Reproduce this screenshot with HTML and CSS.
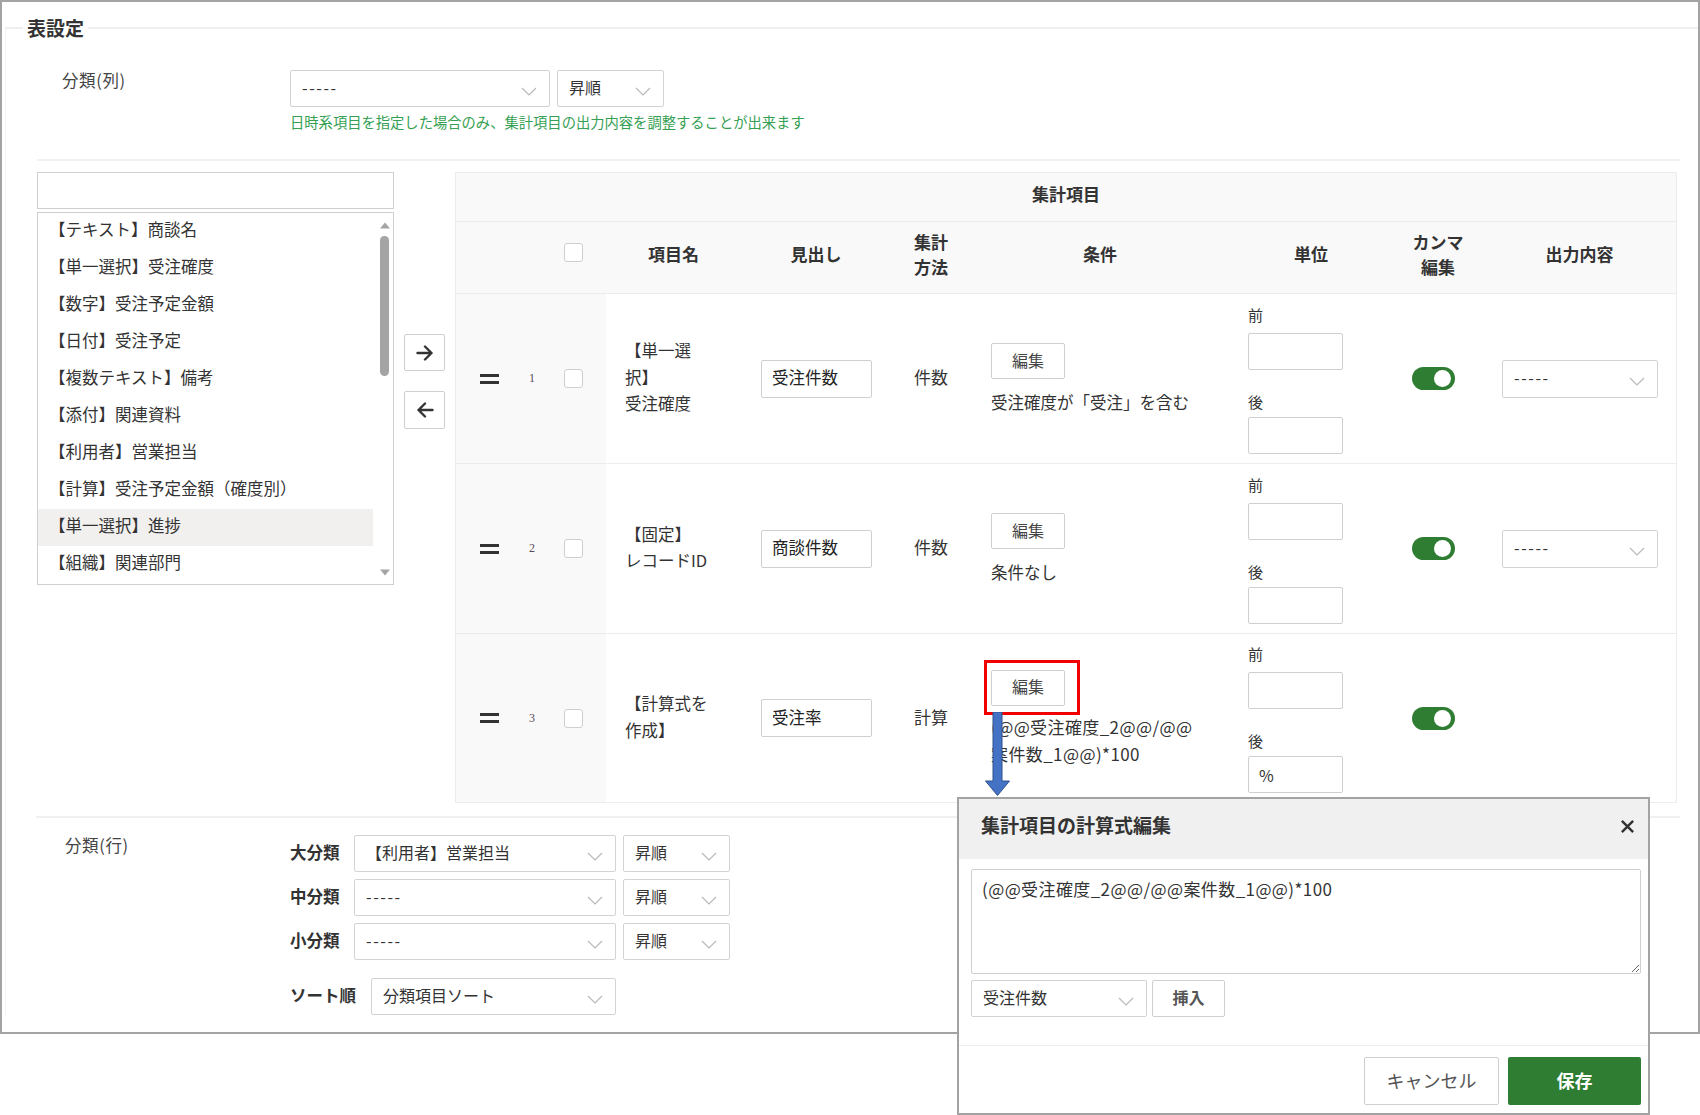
FILE: index.html
```html
<!DOCTYPE html>
<html lang="ja">
<head>
<meta charset="utf-8">
<title>表設定</title>
<link rel="stylesheet" href="styles.css">
</head>
<body>
<div class="frame">
  <fieldset class="fs">
    <legend class="fs-title">表設定</legend>

    <div class="col-row">
      <div class="lbl">分類(列)</div>
      <div>
        <div class="sel-line">
          <div class="sel w260"><span class="dash">-----</span><svg class="chev" viewBox="0 0 16 9"><path d="M1 1l7 7 7-7"/></svg></div>
          <div class="sel w107"><span>昇順</span><svg class="chev" viewBox="0 0 16 9"><path d="M1 1l7 7 7-7"/></svg></div>
        </div>
        <p class="help">日時系項目を指定した場合のみ、集計項目の出力内容を調整することが出来ます</p>
      </div>
    </div>

    <hr class="sep">

    <div class="main">
      <div class="picker">
        <div class="search"></div>
        <div class="listbox">
          <ul class="items">
            <li>【テキスト】商談名</li>
            <li>【単一選択】受注確度</li>
            <li>【数字】受注予定金額</li>
            <li>【日付】受注予定</li>
            <li>【複数テキスト】備考</li>
            <li>【添付】関連資料</li>
            <li>【利用者】営業担当</li>
            <li>【計算】受注予定金額（確度別）</li>
            <li class="on">【単一選択】進捗</li>
            <li>【組織】関連部門</li>
          </ul>
          <div class="sbar">
            <svg class="tri" viewBox="0 0 10 6"><path d="M5 0L10 6H0z"/></svg>
            <div class="thumb"></div>
            <svg class="tri down" viewBox="0 0 10 6"><path d="M0 0H10L5 6z"/></svg>
          </div>
        </div>
      </div>

      <div class="movers">
        <div class="mv"><svg viewBox="0 0 18 16"><path d="M1.5 8H15.5M9 1.5L15.5 8 9 14.5"/></svg></div>
        <div class="mv mv2"><svg viewBox="0 0 18 16"><path d="M16.5 8H2.5M9 1.5L2.5 8 9 14.5"/></svg></div>
      </div>

      <div class="agg">
        <div class="agg-title">集計項目</div>
        <div class="grid head">
          <div class="c lead"><span class="cb hcb"></span></div>
          <div class="c ctr">項目名</div>
          <div class="c ctr">見出し</div>
          <div class="c ctr two">集計<br>方法</div>
          <div class="c ctr">条件</div>
          <div class="c ctr">単位</div>
          <div class="c ctr two">カンマ<br>編集</div>
          <div class="c ctr">出力内容</div>
        </div>

        <div class="grid row">
          <div class="c lead"><span class="handle"></span><span class="num">1</span><span class="cb"></span></div>
          <div class="c name">【単一選<br>択】<br>受注確度</div>
          <div class="c pl20"><div class="inp">受注件数</div></div>
          <div class="c ctr">件数</div>
          <div class="c cond"><div><div class="btn">編集</div><div class="ctext">受注確度が「受注」を含む</div></div></div>
          <div class="c unit"><div><div class="ul">前</div><div class="uin"></div><div class="ul ul2">後</div><div class="uin"></div></div></div>
          <div class="c tg"><span class="toggle"></span></div>
          <div class="c out"><div class="sel w156"><span class="dash">-----</span><svg class="chev" viewBox="0 0 16 9"><path d="M1 1l7 7 7-7"/></svg></div></div>
        </div>

        <div class="grid row">
          <div class="c lead"><span class="handle"></span><span class="num">2</span><span class="cb"></span></div>
          <div class="c name">【固定】<br>レコードID</div>
          <div class="c pl20"><div class="inp">商談件数</div></div>
          <div class="c ctr">件数</div>
          <div class="c cond"><div><div class="btn">編集</div><div class="ctext">条件なし</div></div></div>
          <div class="c unit"><div><div class="ul">前</div><div class="uin"></div><div class="ul ul2">後</div><div class="uin"></div></div></div>
          <div class="c tg"><span class="toggle"></span></div>
          <div class="c out"><div class="sel w156"><span class="dash">-----</span><svg class="chev" viewBox="0 0 16 9"><path d="M1 1l7 7 7-7"/></svg></div></div>
        </div>

        <div class="grid row last">
          <div class="c lead"><span class="handle"></span><span class="num">3</span><span class="cb"></span></div>
          <div class="c name">【計算式を<br>作成】</div>
          <div class="c pl20"><div class="inp">受注率</div></div>
          <div class="c ctr">計算</div>
          <div class="c cond"><div><div class="hl-wrap"><div class="btn">編集</div><span class="hl"></span></div><div class="ctext formula">(@@受注確度_2@@/@@<br>案件数_1@@)*100</div></div></div>
          <div class="c unit"><div><div class="ul">前</div><div class="uin"></div><div class="ul ul2">後</div><div class="uin">%</div></div></div>
          <div class="c tg"><span class="toggle"></span></div>
          <div class="c out"></div>
        </div>
      </div>
    </div>

    <hr class="sep sep2">

    <div class="rowcat">
      <div class="lbl lbl2">分類(行)</div>
      <div>
        <div class="levels">
          <div class="lv">大分類</div>
          <div class="sel"><span>【利用者】営業担当</span><svg class="chev" viewBox="0 0 16 9"><path d="M1 1l7 7 7-7"/></svg></div>
          <div class="sel"><span>昇順</span><svg class="chev" viewBox="0 0 16 9"><path d="M1 1l7 7 7-7"/></svg></div>
          <div class="lv">中分類</div>
          <div class="sel"><span class="dash">-----</span><svg class="chev" viewBox="0 0 16 9"><path d="M1 1l7 7 7-7"/></svg></div>
          <div class="sel"><span>昇順</span><svg class="chev" viewBox="0 0 16 9"><path d="M1 1l7 7 7-7"/></svg></div>
          <div class="lv">小分類</div>
          <div class="sel"><span class="dash">-----</span><svg class="chev" viewBox="0 0 16 9"><path d="M1 1l7 7 7-7"/></svg></div>
          <div class="sel"><span>昇順</span><svg class="chev" viewBox="0 0 16 9"><path d="M1 1l7 7 7-7"/></svg></div>
        </div>
        <div class="sortrow">
          <div class="lv">ソート順</div>
          <div class="sel w245"><span>分類項目ソート</span><svg class="chev" viewBox="0 0 16 9"><path d="M1 1l7 7 7-7"/></svg></div>
        </div>
      </div>
    </div>
  </fieldset>
</div>

<svg class="blue-arrow" viewBox="0 0 28 85"><path d="M10 0H19V69H26.5L14.5 83.5 2.5 69H10Z"/></svg>

<div class="modal">
  <div class="m-head">
    <div class="m-title">集計項目の計算式編集</div>
    <svg class="m-close" viewBox="0 0 16 16"><path d="M2 2L14 14M14 2L2 14"/></svg>
  </div>
  <div class="m-body">
    <textarea class="m-text" readonly>(@@受注確度_2@@/@@案件数_1@@)*100</textarea>
    <div class="m-ins">
      <div class="sel w176"><span>受注件数</span><svg class="chev" viewBox="0 0 16 9"><path d="M1 1l7 7 7-7"/></svg></div>
      <div class="btn ins">挿入</div>
    </div>
  </div>
  <div class="m-foot">
    <div class="fbtn cancel">キャンセル</div>
    <div class="fbtn save">保存</div>
  </div>
</div>
</body>
</html>
```

FILE: styles.css
```css
* { box-sizing: border-box; }
html, body { margin: 0; padding: 0; background: #fff; }
body {
  font-family: "Noto Sans CJK JP", "Noto Sans", sans-serif;
  color: #333;
  font-size: 17px;
  position: relative;
  width: 1700px;
  height: 1115px;
  overflow: hidden;
}

.frame {
  width: 1700px;
  height: 1034px;
  border: 2px solid #a3a3a3;
}

.fs {
  margin: 14px 0 0 3px;
  padding: 0;
  border: 0;
  border-top: 2px solid #efefef;
  border-left: 1px solid #f2f2f2;
  min-inline-size: 0;
}
.fs-title {
  margin-left: 17px;
  padding: 0 4px;
  font-size: 19px;
  font-weight: bold;
  line-height: 24px;
  color: #333;
}

/* 分類(列) */
.col-row {
  display: grid;
  grid-template-columns: 228px 1fr;
  padding: 30px 0 0 56px;
}
.lbl { font-size: 16.5px; letter-spacing: 0.6px; line-height: 20px; margin-top: 0; color: #444; }
.sel-line { display: flex; gap: 7px; }
.sel {
  height: 37px;
  border: 1px solid #d3d3d3;
  border-radius: 2px;
  background: #fff;
  display: flex;
  align-items: center;
  justify-content: space-between;
  padding: 0 12px 3px 11px;
  font-size: 16px;
  color: #333;
  white-space: nowrap;
}
.sel span { line-height: 20px; }
.sel .dash { letter-spacing: 1.6px; }
.chev { width: 16px; height: 9px; margin-top: 9px; flex: none; }
.chev path { fill: none; stroke: #b9b9b9; stroke-width: 1.2; }
.w260 { width: 260px; }
.w107 { width: 107px; }
.w156 { width: 156px; height: 38px; }
.w245 { width: 245px; }
.w176 { width: 176px; }
.help {
  margin: 5px 0 0;
  font-size: 14.3px;
  line-height: 20px;
  color: #34a052;
}

.sep {
  height: 0;
  border: 0;
  border-top: 2px solid #f0f0f0;
  margin: 27px 18px 0 31px;
}

/* main */
.main {
  display: flex;
  align-items: flex-start;
  margin: 11px 0 0 31px;
}
.picker { width: 357px; }
.search { height: 37px; border: 1px solid #cfcfcf; background: #fff; }
.listbox {
  margin-top: 3px;
  height: 373px;
  border: 1px solid #cfcfcf;
  display: flex;
}
.items { list-style: none; margin: 0; padding: 0; flex: 1; }
.items li {
  height: 37px;
  line-height: 33px;
  padding-left: 11px;
  font-size: 16.5px;
  white-space: nowrap;
}
.items li.on { background: #f1f0ef; }
.sbar {
  width: 17px;
  margin-left: 3px;
  display: flex;
  flex-direction: column;
  align-items: center;
}
.tri { width: 10px; height: 7px; margin-top: 9px; flex: none; }
.tri path { fill: #a4a4a4; }
.tri.down { margin-top: auto; margin-bottom: 8px; }
.thumb { width: 9px; height: 140px; margin-top: 7px; border-radius: 5px; background: #a4a4a4; }

.movers { width: 41px; margin-left: 10px; padding-top: 162px; }
.mv {
  height: 37px;
  border: 1px solid #cfcfcf;
  border-radius: 2px;
  display: flex;
  align-items: center;
  justify-content: center;
  background: #fff;
}
.mv2 { margin-top: 20px; height: 38px; }
.mv svg { width: 18px; height: 16px; }
.mv path { fill: none; stroke: #333; stroke-width: 2.4; stroke-linecap: round; stroke-linejoin: round; }

/* 集計項目 table */
.agg {
  width: 1222px;
  margin-left: 10px;
  border: 1px solid #ececec;
}
.agg-title {
  height: 49px;
  padding-bottom: 8px;
  border-bottom: 1px solid #ececec;
  background: #f9f9f9;
  display: flex;
  align-items: center;
  justify-content: center;
  font-weight: bold;
  font-size: 17px;
}
.grid {
  display: grid;
  grid-template-columns: 150px 135px 150px 80px 258px 164px 90px 193px;
  border-bottom: 1px solid #ececec;
}
.grid.last { border-bottom: 0; }
.head { height: 72px; background: #f9f9f9; font-weight: bold; }
.head .c { padding-bottom: 8px; }
.head .lead { padding-bottom: 0; }
.row { height: 170px; }
.row.last { height: 168px; }
.c { display: flex; align-items: center; }
.ctr { justify-content: center; text-align: center; }
.row .ctr { padding-bottom: 4px; }
.two { line-height: 25px; }
.lead { background: #f9f9f9; padding-left: 24px; }
.head .lead { padding-left: 108px; }
.hcb { margin-bottom: 10px; }
.handle {
  width: 19px;
  height: 10px;
  border-top: 3px solid #333;
  border-bottom: 3px solid #333;
  flex: none;
}
.num {
  width: 8px;
  margin-left: 29px;
  font-size: 12px;
  color: #5a4a5a;
  text-align: center;
  font-family: "Liberation Serif", serif;
}
.cb {
  width: 19px;
  height: 19px;
  border: 1px solid #cfcfcf;
  border-radius: 3px;
  background: #fff;
  margin-left: 28px;
  flex: none;
}
.head .cb { margin-left: 0; }
.name { padding-left: 19px; padding-bottom: 3px; line-height: 26.5px; font-size: 16.5px; }
.pl20 { padding-left: 20px; }
.inp {
  width: 111px;
  height: 38px;
  border: 1px solid #cfcfcf;
  border-radius: 2px;
  padding: 0 0 3px 10px;
  display: flex;
  align-items: center;
  font-size: 16.5px;
  color: #222;
}
.cond { padding-left: 20px; }
.btn {
  width: 74px;
  height: 36px;
  border: 1px solid #cfcfcf;
  border-radius: 2px;
  background: #fff;
  display: flex;
  align-items: center;
  justify-content: center;
  padding-bottom: 3px;
  font-size: 16px;
  color: #444;
}
.ctext { margin-top: 11px; font-size: 16.5px; line-height: 24px; white-space: nowrap; }
.formula { margin-top: 7px; line-height: 27px; font-size: 17px; letter-spacing: 0.4px; }
.hl-wrap { position: relative; width: 74px; }
.hl {
  position: absolute;
  left: -7px;
  top: -10px;
  width: 96px;
  height: 55px;
  border: 3px solid #f00000;
}
.unit { padding-left: 19px; }
.ul { font-size: 15px; line-height: 22px; }
.ul2 { margin-top: 21px; }
.uin {
  width: 95px;
  height: 37px;
  border: 1px solid #cfcfcf;
  border-radius: 2px;
  margin-top: 7px;
  padding-left: 10px;
  display: flex;
  align-items: center;
  font-size: 16px;
}
.ul2 + .uin { margin-top: 4px; }
.tg { padding-left: 19px; }
.toggle {
  width: 43px;
  height: 23px;
  border-radius: 12px;
  background: #2e7d32;
  position: relative;
  display: block;
}
.toggle::after {
  content: "";
  position: absolute;
  right: 4px;
  top: 3px;
  width: 17px;
  height: 17px;
  border-radius: 50%;
  background: #fff;
}
.out { padding-left: 19px; }

.sep2 { margin: 13px 18px 0 30px; }

/* 分類(行) */
.rowcat {
  display: grid;
  grid-template-columns: 225px 1fr;
  padding: 17px 0 0 59px;
}
.lbl2 { margin-top: 0; }
.levels {
  display: grid;
  grid-template-columns: 64px 262px 114px;
  column-gap: 0;
  row-gap: 7px;
}
.levels .sel { height: 37px; }
.levels .sel + .sel { margin-left: 7px; }
.lv { font-weight: bold; font-size: 16.5px; display: flex; align-items: center; padding-bottom: 3px; white-space: nowrap; }
.sortrow { display: grid; grid-template-columns: 81px 245px; margin-top: 18px; }

/* overlays */
.blue-arrow {
  position: absolute;
  left: 983px;
  top: 712px;
  width: 28px;
  height: 85px;
  z-index: 2;
}
.blue-arrow path { fill: #4472c4; stroke: #2f528f; stroke-width: 1; }

.modal {
  position: absolute;
  left: 957px;
  top: 797px;
  width: 693px;
  height: 318px;
  border: 2px solid #a3a3a3;
  background: #fff;
  z-index: 3;
}
.m-head {
  height: 60px;
  background: #f0f0f0;
  display: flex;
  align-items: center;
  justify-content: space-between;
  padding: 0 13px 9px 22px;
}
.m-title { font-size: 19px; font-weight: bold; color: #333; }
.m-close { width: 15px; height: 15px; margin-top: 4px; }
.m-close path { stroke: #333; stroke-width: 2.6; fill: none; }
.m-body { padding: 10px 7px 0 12px; height: 187px; border-bottom: 1px solid #eeeeee; }
.m-text {
  display: block;
  width: 670px;
  height: 105px;
  border: 1px solid #cfcfcf;
  border-radius: 2px;
  padding: 8px 10px;
  font-family: "Noto Sans CJK JP", "Noto Sans", sans-serif;
  font-size: 17px;
  letter-spacing: 0.4px;
  line-height: 22px;
  color: #333;
  resize: both;
  outline: none;
}
.m-ins { display: flex; gap: 5px; margin-top: 6px; }
.m-ins .sel { height: 37px; }
.ins { width: 73px; height: 37px; font-weight: bold; color: #555; }
.m-foot {
  display: flex;
  justify-content: flex-end;
  gap: 9px;
  padding: 11px 7px 0 0;
}
.fbtn {
  height: 48px;
  display: flex;
  align-items: center;
  justify-content: center;
  padding-bottom: 3px;
  font-size: 18px;
  border-radius: 2px;
}
.cancel { width: 135px; border: 1px solid #cfcfcf; color: #555; background: #fff; }
.save { width: 133px; background: #2e7d32; color: #fff; font-weight: bold; }
```
